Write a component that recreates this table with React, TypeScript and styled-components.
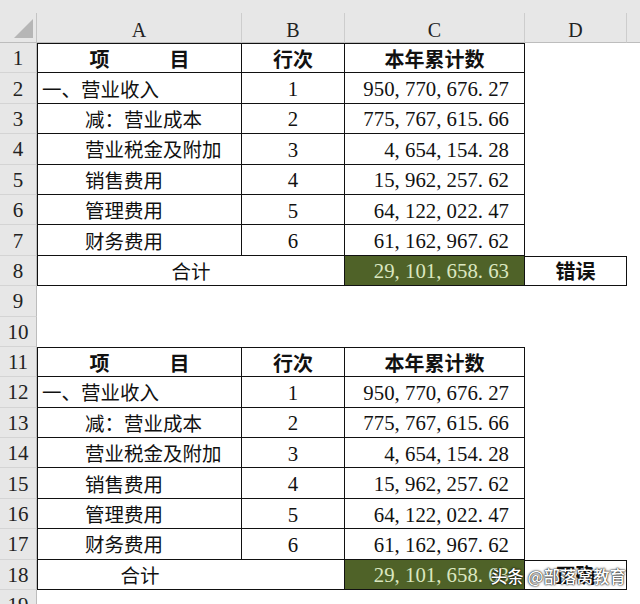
import React from "react";
import styled, { createGlobalStyle, css } from "styled-components";

const COLS = "37px 205px 103px 180px 102px 1fr";
const ROW_H = 30.4;

const Global = createGlobalStyle`
  html, body { margin: 0; padding: 0; background: #fff; }
  body { font-family: "Noto Sans CJK SC", sans-serif; }
`;

const Sheet = styled.div`
  position: relative;
  width: 640px;
  height: 604px;
  overflow: hidden;
  background: #fff;
  display: flex;
  flex-direction: column;
`;

const HeaderRow = styled.div`
  display: grid;
  grid-template-columns: ${COLS};
  height: 43px;
  flex: none;
  background: #e7e7e7;
  align-items: end;
`;

const Corner = styled.div`
  height: 30px;
  box-sizing: border-box;
  border-right: 1px solid #c4c4c4;
  border-bottom: 1px solid #bdbdbd;
  display: flex;
  align-items: flex-end;
  justify-content: flex-end;
  padding: 0 3px 4px 0;
`;

const Triangle = styled.div`
  width: 19px;
  height: 19px;
  background: #b6b6b6;
  clip-path: polygon(100% 0, 100% 100%, 0 100%);
`;

const ColHead = styled.div<{ $last?: boolean }>`
  height: 30px;
  box-sizing: border-box;
  border-right: ${(p) => (p.$last ? "none" : "1px solid #cdcdcd")};
  border-bottom: 1px solid #bdbdbd;
  display: flex;
  align-items: center;
  justify-content: center;
  padding-top: 5px;
  font-family: "Liberation Serif", serif;
  font-size: 20px;
  color: #222;
`;

const Row = styled.div`
  position: relative;
  display: grid;
  grid-template-columns: ${COLS};
  height: ${ROW_H}px;
  flex: none;
`;

const RowHead = styled.div`
  background: #e7e7e7;
  box-sizing: border-box;
  border-right: 1px solid #bcbcbc;
  border-bottom: 1px solid #d4d4d4;
  display: flex;
  align-items: center;
  justify-content: center;
  padding-top: 2px;
  font-family: "Liberation Serif", serif;
  font-size: 21px;
  color: #222;
`;

type CellProps = {
  $b?: boolean;
  $top?: boolean;
  $left?: boolean;
  $noRight?: boolean;
  $align?: "left" | "center" | "right";
  $indent?: number;
  $bold?: boolean;
  $fill?: boolean;
  $span?: number;
  $num?: boolean;
};

const Cell = styled.div<CellProps>`
  box-sizing: border-box;
  min-width: 0;
  overflow: hidden;
  white-space: nowrap;
  display: flex;
  align-items: center;
  grid-column: span ${(p) => p.$span ?? 1};
  justify-content: ${(p) =>
    p.$align === "left" ? "flex-start" : p.$align === "right" ? "flex-end" : "center"};
  padding-left: ${(p) => p.$indent ?? 0}px;
  padding-right: ${(p) => (p.$align === "right" ? 15 : 0)}px;
  padding-top: ${(p) => (p.$num ? 2 : 0)}px;
  font-family: ${(p) =>
    p.$num ? '"Liberation Serif", serif' : '"Noto Sans CJK SC", sans-serif'};
  font-size: ${(p) => (p.$num ? 20.8 : p.$bold ? 20 : 19.5)}px;
  font-weight: ${(p) => (p.$bold ? 700 : 400)};
  color: ${(p) => (p.$fill ? "#dbe7c0" : "#111")};
  background: ${(p) => (p.$fill ? "#4f6228" : "transparent")};
  ${(p) =>
    p.$b &&
    css`
      border-bottom: 1px solid #111;
      border-right: ${p.$noRight ? "none" : "1px solid #111"};
    `}
  ${(p) =>
    p.$top &&
    css`
      border-top: 1px solid #111;
    `}
  ${(p) =>
    p.$left &&
    css`
      border-left: 1px solid #111;
    `}
`;

const Punct = styled.span`
  display: inline-block;
  width: 0.5em;
`;

const Watermark = styled.div`
  position: absolute;
  right: 14px;
  top: 50%;
  transform: translateY(-44%);
  font-family: "Noto Sans CJK SC", sans-serif;
  font-size: 16.5px;
  font-weight: 500;
  color: #fff;
  white-space: nowrap;
  pointer-events: none;
  text-shadow: 0 0 1px #000, 0 0 2px rgba(0, 0, 0, 0.75), 0 0 3px rgba(0, 0, 0, 0.4);
`;

const Num = ({ v }: { v: string }) => (
  <span>
    {v.split("").map((c, i) =>
      c === "," || c === "." ? <Punct key={i}>{c}</Punct> : <React.Fragment key={i}>{c}</React.Fragment>
    )}
  </span>
);

const items = [
  { name: "一、营业收入", indent: 4, no: "1", amt: "950,770,676.27" },
  { name: "减：营业成本", indent: 47, no: "2", amt: "775,767,615.66" },
  { name: "营业税金及附加", indent: 47, no: "3", amt: "4,654,154.28" },
  { name: "销售费用", indent: 47, no: "4", amt: "15,962,257.62" },
  { name: "管理费用", indent: 47, no: "5", amt: "64,122,022.47" },
  { name: "财务费用", indent: 47, no: "6", amt: "61,162,967.62" },
];

const TOTAL = "29,101,658.63";

const Table = ({
  start,
  verdict,
  mergedTotal,
  watermark,
}: {
  start: number;
  verdict: string;
  mergedTotal: boolean;
  watermark?: boolean;
}) => (
  <>
    <Row>
      <RowHead>{start}</RowHead>
      <Cell $b $top $left $bold>
        项　　　目
      </Cell>
      <Cell $b $top $bold>
        行次
      </Cell>
      <Cell $b $top $bold>
        本年累计数
      </Cell>
    </Row>
    {items.map((it, i) => (
      <Row key={it.name}>
        <RowHead>{start + 1 + i}</RowHead>
        <Cell $b $left $align="left" $indent={it.indent}>
          {it.name}
        </Cell>
        <Cell $b $num>
          {it.no}
        </Cell>
        <Cell $b $num $align="right">
          <Num v={it.amt} />
        </Cell>
      </Row>
    ))}
    <Row>
      <RowHead>{start + 7}</RowHead>
      {mergedTotal ? (
        <Cell $b $left $span={2}>
          合计
        </Cell>
      ) : (
        <>
          <Cell $b $left $noRight>
            合计
          </Cell>
          <Cell $b />
        </>
      )}
      <Cell $b $num $fill $align="right">
        <Num v={TOTAL} />
      </Cell>
      <Cell $b $top $bold>
        {verdict}
      </Cell>
      {watermark && <Watermark>头条 @部落窝教育</Watermark>}
    </Row>
  </>
);

export default function App() {
  return (
    <>
      <Global />
      <Sheet>
        <HeaderRow>
          <Corner>
            <Triangle />
          </Corner>
          <ColHead>A</ColHead>
          <ColHead>B</ColHead>
          <ColHead>C</ColHead>
          <ColHead>D</ColHead>
          <ColHead $last />
        </HeaderRow>
        <Table start={1} verdict="错误" mergedTotal />
        <Row>
          <RowHead>9</RowHead>
        </Row>
        <Row>
          <RowHead>10</RowHead>
        </Row>
        <Table start={11} verdict="正确" mergedTotal={false} watermark />
        <Row>
          <RowHead>19</RowHead>
        </Row>
      </Sheet>
    </>
  );
}
